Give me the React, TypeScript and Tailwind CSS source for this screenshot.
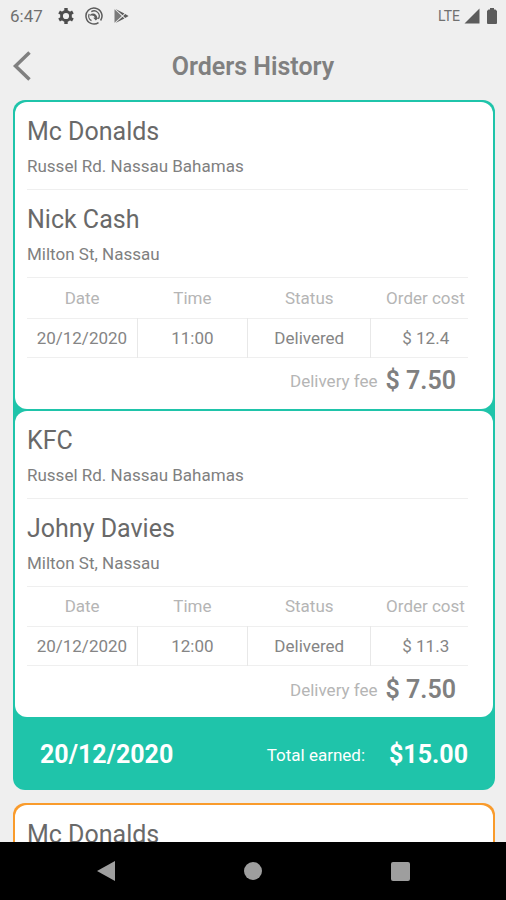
type Delivery = {
  customer: string;
  customerAddress: string;
  date: string;
  time: string;
  status: string;
  cost: string;
  fee: string;
};

type Order = {
  store: string;
  storeAddress?: string;
  delivery?: Delivery;
};

const completedOrders: Order[] = [
  {
    store: "Mc Donalds",
    storeAddress: "Russel Rd. Nassau Bahamas",
    delivery: {
      customer: "Nick Cash",
      customerAddress: "Milton St, Nassau",
      date: "20/12/2020",
      time: "11:00",
      status: "Delivered",
      cost: "$ 12.4",
      fee: "$ 7.50",
    },
  },
  {
    store: "KFC",
    storeAddress: "Russel Rd. Nassau Bahamas",
    delivery: {
      customer: "Johny Davies",
      customerAddress: "Milton St, Nassau",
      date: "20/12/2020",
      time: "12:00",
      status: "Delivered",
      cost: "$ 11.3",
      fee: "$ 7.50",
    },
  },
];

function StatusBar() {
  return (
    <div className="flex h-8 shrink-0 items-center justify-between pr-2 pl-2.5 text-[#5c5c5c]">
      <div className="flex items-center">
        <span className="text-[17px] leading-5 text-[#707070]">6:47</span>
        {/* Settings */}
        <svg className="ml-3.5 size-[18px] text-[#4d4d4d]" viewBox="0 0 18 18" fill="none" stroke="currentColor">
          <circle cx="9" cy="9" r="4.500" strokeWidth="2.800" />
          <path
            d="M9 1v3M9 14v3M2.100 5l2.600 1.500M13.300 11.500l2.600 1.500M2.100 13l2.600-1.500M13.300 6.500 15.900 5"
            strokeWidth="3.400"
          />
        </svg>
        {/* Sync */}
        <svg className="ml-2.5 size-[18px]" viewBox="0 0 18 18" fill="none" stroke="currentColor">
          <path d="M13.500 15.600A8 8 0 1 1 15.600 13.500" strokeWidth="1.500" />
          <path d="M6.500 13.600A5.200 5.200 0 0 1 4.200 6.900M6.300 4.600A5.200 5.200 0 0 1 13.400 11.800" strokeWidth="1.300" />
          <path d="M5.200 7.600C8 5.200 12 7 12.300 10.800l1 .1-2.500 2.600-2.600-2.700 1.500-.1C9.400 8.800 7.300 8 5.200 9Z" fill="currentColor" stroke="none" />
        </svg>
        {/* Play store */}
        <svg className="ml-2.5 h-[18px] w-4" viewBox="0 0 16 18" fill="currentColor">
          <path d="M1.500 2.200v13.600L8.800 9Z" opacity=".8" />
          <path d="M2.500 2 11.400 6.600 9.600 8.300ZM2.500 16l8.900-4.600-1.800-1.700ZM12.200 7l3.400 2-3.400 2-2-2Z" />
        </svg>
      </div>
      <div className="flex items-center">
        <span className="text-sm leading-5 text-[#707070]">LTE</span>
        <svg className="ml-1 size-4" viewBox="0 0 16 16" fill="currentColor">
          <path d="M15.500.5v15H.5Z" />
        </svg>
        <svg className="ml-1.5 h-4 w-3" viewBox="0 0 12 16" fill="currentColor">
          <path d="M4 0h4v1.500h1.500L11 3v12a1 1 0 0 1-1 1H2a1 1 0 0 1-1-1V3l1.500-1.500H4Z" />
        </svg>
      </div>
    </div>
  );
}

function Header() {
  return (
    <header className="grid h-[68px] shrink-0 grid-cols-[48px_1fr_48px] items-center">
      <button aria-label="Back" className="flex h-12 items-center pl-3 text-[#808080]">
        <svg className="h-8 w-5" viewBox="0 0 20 32" fill="none" stroke="currentColor" strokeWidth="3.500">
          <path d="M17.500 2.500 3.500 16l14 13.500" />
        </svg>
      </button>
      <h1 className="pt-0.5 text-center text-[25px] leading-7 font-semibold text-[#808080]">Orders History</h1>
    </header>
  );
}

function Place({ name, address }: { name: string; address?: string }) {
  return (
    <div className="border-b border-[#efefef] pt-4 pb-[13px]">
      <h2 className="text-[25px] leading-7 text-[#696969]">{name}</h2>
      {address && <p className="mt-2.5 text-[17px] leading-5 text-[#808080]">{address}</p>}
    </div>
  );
}

function OrderCard({ order }: { order: Order }) {
  const { store, storeAddress, delivery } = order;

  return (
    <article className="rounded-xl bg-white pr-[25px] pl-3">
      <Place name={store} address={storeAddress} />
      {delivery && (
        <>
          <Place name={delivery.customer} address={delivery.customerAddress} />
          <table className="w-full table-fixed text-center text-[17px] leading-5">
            <thead>
              <tr className="h-10 border-b border-[#efefef] text-[#b5b5b5]">
                <th className="w-1/4 font-normal">Date</th>
                <th className="w-1/4 font-normal">Time</th>
                <th className="w-[28%] font-normal">Status</th>
                <th className="w-[22%] pl-3 font-normal whitespace-nowrap">Order cost</th>
              </tr>
            </thead>
            <tbody>
              <tr className="h-[39px] divide-x divide-[#e8e8e8] border-b border-[#efefef] text-[#858585]">
                <td>{delivery.date}</td>
                <td>{delivery.time}</td>
                <td>{delivery.status}</td>
                <td className="pl-3">{delivery.cost}</td>
              </tr>
            </tbody>
          </table>
          <div className="flex h-[51px] items-center justify-end gap-2 pr-3 pb-1">
            <span className="text-[17px] leading-5 text-[#b5b5b5]">Delivery fee</span>
            <span className="text-[25px] leading-7 font-semibold text-[#808080]">{delivery.fee}</span>
          </div>
        </>
      )}
    </article>
  );
}

export default function App() {
  return (
    <div className="flex h-screen flex-col bg-[#efefef] font-[Roboto,sans-serif]">
      <StatusBar />
      <Header />

      <main className="flex min-h-0 flex-1 flex-col gap-[13px] overflow-hidden pr-[11px] pl-[13px]">
        <section className="shrink-0 rounded-xl bg-[#1fc4aa]">
          <div className="flex flex-col gap-0.5 p-0.5 pb-0">
            {completedOrders.map((order) => (
              <OrderCard key={order.store} order={order} />
            ))}
          </div>
          <footer className="flex h-[73px] items-center px-[27px] pt-0.5 text-white">
            <span className="text-[25px] leading-7 font-bold">20/12/2020</span>
            <span className="ml-auto text-[17px] leading-5">Total earned:</span>
            <span className="ml-6 text-[25px] leading-7 font-bold">$15.00</span>
          </footer>
        </section>

        <section className="shrink-0 rounded-xl bg-[#f99b2c] p-0.5">
          <OrderCard order={{ store: "Mc Donalds" }} />
        </section>
      </main>

      <nav className="grid h-[58px] shrink-0 grid-cols-[1fr_84px_1fr] items-center bg-black text-[#9e9e9e]">
        <button aria-label="Back" className="flex justify-center">
          <svg className="h-5 w-[18px]" viewBox="0 0 18 20" fill="currentColor">
            <path d="M18 0v20L0 10Z" />
          </svg>
        </button>
        <button aria-label="Home" className="flex justify-center">
          <span className="size-[18px] rounded-full bg-[#9e9e9e]" />
        </button>
        <button aria-label="Recent apps" className="flex justify-center">
          <span className="size-[19px] rounded-xs bg-[#9e9e9e]" />
        </button>
      </nav>
    </div>
  );
}
